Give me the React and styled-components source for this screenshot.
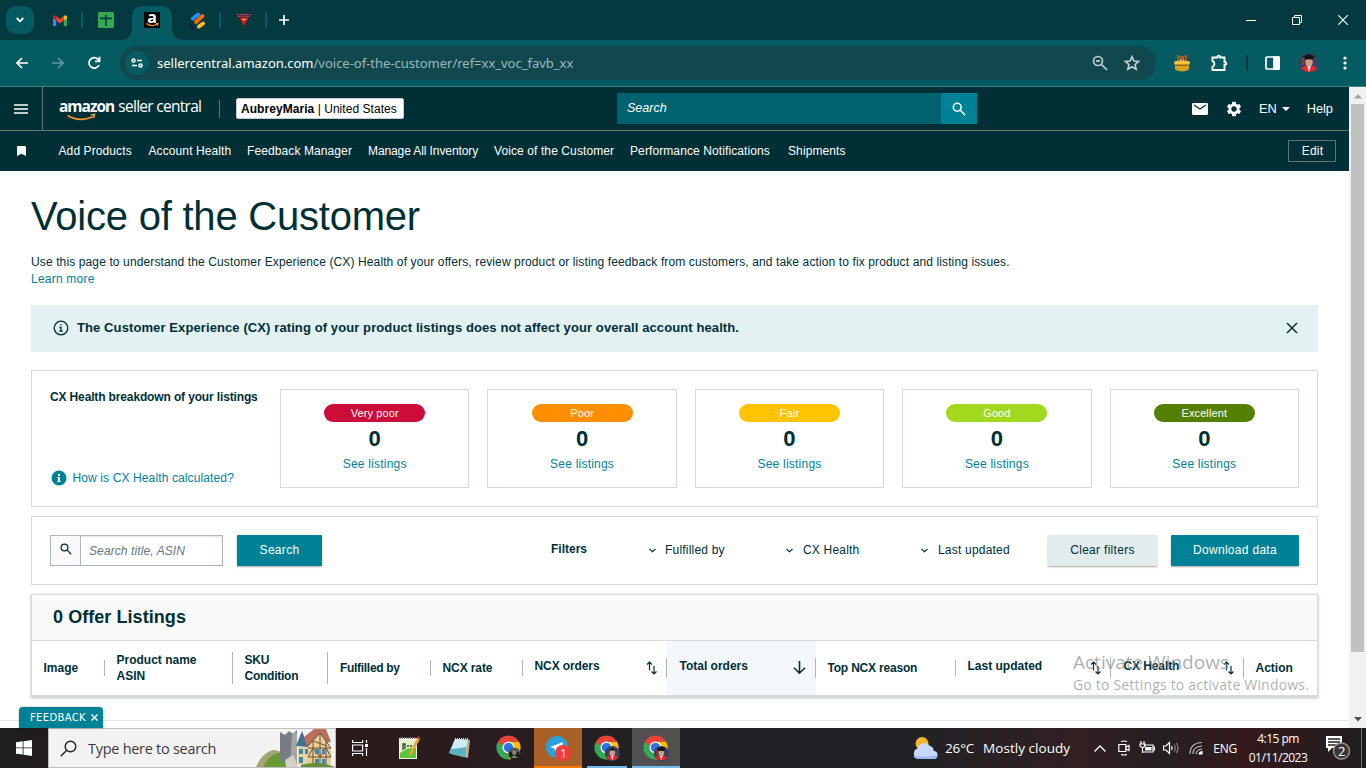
import React from "react";
import styled, { createGlobalStyle } from "styled-components";

const GlobalStyle = createGlobalStyle`
  * { box-sizing: border-box; }
  body {
    margin: 0;
    background: #fff;
    overflow: hidden;
    font-family: "Liberation Sans", Arial, sans-serif;
    font-size: 12px;
    color: #002f36;
  }
  svg { display: block; flex: none; }
`;

const Screen = styled.div`
  width: 1366px;
  height: 768px;
  display: flex;
  flex-direction: column;
  overflow: hidden;
  white-space: nowrap;
`;

/* ---------- browser ---------- */

const TabStrip = styled.div`
  height: 40px;
  flex: none;
  display: flex;
  align-items: center;
  background: #023a3f;
  padding-left: 6px;
`;

const TabSearch = styled.div`
  width: 28px;
  height: 28px;
  border-radius: 10px;
  background: #055b62;
  display: flex;
  align-items: center;
  justify-content: center;
  margin-right: 3px;
`;

const Tab = styled.div`
  width: 46px;
  height: 16px;
  display: flex;
  align-items: center;
  justify-content: center;
  padding-left: 2px;
  border-right: 2px solid ${(p) => (p.$line ? "#055b62" : "transparent")};
`;

const ActiveTab = styled.div`
  width: 40px;
  height: 34px;
  margin: 6px 3px 0;
  padding-bottom: 6px;
  border-radius: 10px 10px 0 0;
  background: #055b62;
  display: flex;
  align-items: center;
  justify-content: center;
  position: relative;
  &::before, &::after {
    content: "";
    position: absolute;
    bottom: 0;
    width: 10px;
    height: 10px;
  }
  &::before {
    left: -10px;
    background: radial-gradient(circle at 0 0, transparent 9.5px, #055b62 10px);
  }
  &::after {
    right: -10px;
    background: radial-gradient(circle at 100% 0, transparent 9.5px, #055b62 10px);
  }
`;

const AmazonFavicon = styled.div`
  width: 16px;
  height: 16px;
  background: #000;
  color: #fff;
  font: bold 16px/11px "Open Sans", sans-serif;
  display: flex;
  flex-direction: column;
  align-items: center;
`;

const NewTab = styled.div`
  margin-left: 11px;
`;

const WindowButtons = styled.div`
  margin-left: auto;
  display: flex;
`;

const WindowButton = styled.div`
  width: 46px;
  display: flex;
  align-items: center;
  justify-content: center;
`;

const Toolbar = styled.div`
  height: 47px;
  flex: none;
  background: #055b62;
  border-bottom: 1px solid #3f7f84;
  display: flex;
  align-items: center;
  padding: 0 14px;
`;

const ToolIcon = styled.div`
  width: ${(p) => p.$w || 36}px;
  display: flex;
  align-items: center;
  justify-content: center;
`;

const AddressBar = styled.div`
  width: 1036px;
  height: 34px;
  margin-left: -2px;
  border-radius: 17px;
  background: #11484e;
  display: flex;
  align-items: center;
  padding: 0 16px 0 5px;
  color: #9db8bb;
  font: 13px "Noto Sans", sans-serif;
  letter-spacing: -0.01px;
  b {
    font-weight: normal;
    color: #fff;
  }
  > svg:last-child { margin-left: 16px; }
`;

const SiteInfo = styled.div`
  width: 24px;
  height: 24px;
  border-radius: 50%;
  background: #055b62;
  display: flex;
  align-items: center;
  justify-content: center;
  margin-right: 8px;
`;

const Url = styled.div`
  flex: 1;
`;

const ToolDivider = styled.div`
  width: 2px;
  height: 16px;
  margin: 0 17px 0 16px;
  background: #023a3f;
`;

const Viewport = styled.div`
  height: 641px;
  flex: none;
  display: flex;
`;

const Page = styled.div`
  width: 1349px;
  display: flex;
  flex-direction: column;
  position: relative;
`;

const Scrollbar = styled.div`
  width: 17px;
  background: #f1f1f1;
  display: flex;
  flex-direction: column;
  align-items: center;
  justify-content: space-between;
  padding: 7px 0 6px;
`;

const ScrollThumb = styled.div`
  width: 13px;
  height: 548px;
  background: #c1c1c1;
  margin: 5px 0 auto;
`;

/* ---------- seller central header ---------- */

const Header = styled.div`
  height: 44px;
  flex: none;
  background: #002f36;
  border-bottom: 1px solid #5f7377;
  display: flex;
  align-items: center;
  color: #fff;
`;

const MenuButton = styled.div`
  width: 43px;
  height: 43px;
  border-right: 1px solid #5f7377;
  display: flex;
  align-items: center;
  justify-content: center;
`;

const Logo = styled.div`
  width: 160px;
  height: 26px;
  margin-left: 16px;
  display: flex;
  flex-direction: column;
`;

const LogoText = styled.div`
  font: 15.5px/20px "Open Sans", sans-serif;
  letter-spacing: -0.72px;
  b {
    margin-right: 4px;
    letter-spacing: -1px;
  }
`;

const LogoSmile = styled.svg`
  margin: -3px 0 0 7px;
`;

const HeaderDivider = styled.div`
  width: 1px;
  height: 18px;
  background: #5f7377;
  margin-right: 16px;
`;

const AccountPicker = styled.div`
  width: 168px;
  height: 21px;
  border: 1px solid #c5cccc;
  border-radius: 2px;
  background: #fff;
  color: #000;
  line-height: 20px;
  padding-left: 4px;
  letter-spacing: 0.05px;
`;

const HeaderSearch = styled.div`
  width: 360px;
  height: 31px;
  margin-left: 213px;
  background: #00616f;
  display: flex;
  font-style: italic;
  font-size: 12.5px;
  line-height: 31px;
  padding-left: 10px;
  letter-spacing: 0;
`;

const HeaderSearchButton = styled.div`
  width: 36px;
  margin-left: auto;
  background: #008296;
  display: flex;
  align-items: center;
  justify-content: center;
`;

const HeaderTools = styled.div`
  margin-left: auto;
  padding-right: 16px;
  display: flex;
  align-items: center;
  font-size: 12.8px;
  line-height: 17px;
`;

const Language = styled.span`
  display: flex;
  align-items: center;
  gap: 5px;
  margin: 0 17px 0 16px;
`;

const NavBar = styled.div`
  height: 40px;
  flex: none;
  background: #002f36;
  color: #fff;
  display: flex;
  align-items: center;
  padding: 0 13px 0 17px;
`;

const NavLinks = styled.div`
  display: grid;
  grid-template-columns: 90px 98.5px 121px 126px 136px 158px 70px;
  margin-left: 32.5px;
  letter-spacing: 0.1px;
  span:nth-child(4) { letter-spacing: -0.1px; }
`;

const EditButton = styled.div`
  width: 48px;
  height: 22px;
  margin-left: auto;
  border: 1px solid #5f7377;
  text-align: center;
  line-height: 20px;
  letter-spacing: 0.2px;
  padding-left: 1px;
`;

/* ---------- page content ---------- */

const Content = styled.div`
  padding: 22px 31px 0;
  flex: 1;
`;

const Title = styled.h1`
  margin: 0;
  font-weight: normal;
  font-size: 40px;
  line-height: 46px;
  letter-spacing: -0.22px;
`;

const Intro = styled.p`
  margin: 15px 0 0;
  line-height: 17px;
  letter-spacing: 0.12px;
`;

const Link = styled.a`
  color: #008296;
  letter-spacing: 0.22px;
`;

const Alert = styled.div`
  height: 47px;
  margin-top: 17px;
  background: #e3f1f2;
  display: flex;
  align-items: center;
  gap: 8px;
  padding: 0 20px 2px 22px;
  font-size: 13px;
  font-weight: bold;
  letter-spacing: 0.1px;
  svg:last-child { margin-left: auto; }
`;

const Panel = styled.div`
  border: 1px solid #d5dbdb;
  display: flex;
`;

const HealthPanel = styled(Panel)`
  height: 137px;
  margin-top: 18px;
  padding: 18px;
`;

const HealthIntro = styled.div`
  width: 230px;
  height: 99px;
  display: flex;
  flex-direction: column;
  justify-content: space-between;
  padding: 1px 0 2px;
  b { letter-spacing: -0.14px; }
`;

const HowLink = styled(Link)`
  display: flex;
  align-items: center;
  gap: 5.5px;
  padding-left: 1px;
  letter-spacing: 0.12px;
`;

const HealthCards = styled.div`
  flex: 1;
  display: grid;
  grid-template-columns: repeat(5, 1fr);
  gap: 18px;
`;

const Card = styled.div`
  height: 99px;
  border: 1px solid #d5dbdb;
  padding-top: 14px;
  display: flex;
  flex-direction: column;
  align-items: center;
`;

const Pill = styled.div`
  width: 101px;
  height: 18px;
  border-radius: 9px;
  background: ${(p) => p.$color};
  color: #fff;
  font-size: 11px;
  line-height: 19px;
  text-align: center;
  letter-spacing: 0.1px;
`;

const Count = styled.div`
  font-size: 22px;
  font-weight: bold;
  line-height: 26px;
  margin: 4px 0 5px;
`;

const FilterPanel = styled(Panel)`
  height: 69px;
  margin-top: 9px;
  padding: 18px;
  align-items: flex-start;
  letter-spacing: 0.2px;
`;

const SearchBox = styled.div`
  width: 173px;
  height: 31px;
  border: 1px solid #aab7b8;
  display: flex;
  color: #687778;
  font-style: italic;
  line-height: 31px;
  letter-spacing: 0.1px;
  box-shadow: inset 0 1px 2px rgba(0, 0, 0, 0.12);
`;

const SearchBoxIcon = styled.div`
  width: 30px;
  background: #fafafa;
  border-right: 1px solid #aab7b8;
  margin-right: 8px;
  display: flex;
  justify-content: center;
  padding-top: 7px;
`;

const Button = styled.div`
  width: ${(p) => p.$w}px;
  height: 31px;
  margin-left: 14px;
  border-radius: 1px;
  background: ${(p) => (p.$light ? "#e3eced" : "#008296")};
  color: ${(p) => (p.$light ? "#002f36" : "#fff")};
  box-shadow: 0 1px 2px rgba(0, 0, 0, 0.35);
  line-height: 30px;
  text-align: center;
  letter-spacing: 0.3px;
`;

const FiltersLabel = styled.b`
  margin-left: 229px;
  width: 98px;
  line-height: 28px;
  letter-spacing: 0;
`;

const Filter = styled.div`
  width: ${(p) => p.$w}px;
  display: flex;
  align-items: center;
  gap: ${(p) => p.$gap || 9}px;
  height: 30px;
`;

const TablePanel = styled.div`
  height: 103px;
  margin-top: 9px;
  border: 1px solid #d5dbdb;
  border-bottom-width: 2px;
  box-shadow: 0 1px 3px rgba(0, 0, 0, 0.25);
`;

const TableTitle = styled.div`
  height: 46px;
  background: #fafafa;
  border-bottom: 1px solid #d5dbdb;
  font-size: 18px;
  font-weight: bold;
  line-height: 44px;
  padding-left: 21px;
  letter-spacing: 0.06px;
`;

const TableHead = styled.div`
  height: 54px;
  display: grid;
  grid-template-columns: 73px 128px 95px 103px 92px 144px 149px 140px 155px 133px 73px;
  font-weight: bold;
`;

const HeadCell = styled.div`
  background: ${(p) => (p.$active ? "#f4f8fa" : "none")};
  display: flex;
  align-items: center;
`;

const HeadLabel = styled.div`
  flex: 1;
  height: ${(p) => p.$h}px;
  line-height: 16px;
  border-right: ${(p) => (p.$last ? "none" : "1px solid #aab7b8")};
  padding: 0 9px 0 ${(p) => p.$pad || 11.5}px;
  letter-spacing: ${(p) => p.$ls || 0}px;
  display: flex;
  justify-content: space-between;
  white-space: pre;
  svg { margin-top: 3px; }
`;

const PageFooter = styled.div`
  height: 8px;
  border-top: 1px solid #e7e9e9;
`;

const FeedbackTab = styled.div`
  position: absolute;
  left: 19px;
  bottom: 0;
  width: 84px;
  height: 21px;
  border-radius: 4px 4px 0 0;
  background: #008296;
  box-shadow: 0 0 2px rgba(0, 0, 0, 0.4);
  color: #fff;
  font: 10px/21px "DejaVu Sans", sans-serif;
  letter-spacing: 0.35px;
  display: flex;
  align-items: center;
  gap: 5px;
  padding-left: 11px;
`;

const Watermark = styled.div`
  position: absolute;
  left: 1073px;
  top: 563px;
  color: rgba(140, 145, 145, 0.72);
  font: 14px/22px "Open Sans", sans-serif;
  letter-spacing: 0.19px;
  div {
    font-size: 19px;
    line-height: 24px;
    letter-spacing: 0;
  }
`;

/* ---------- taskbar ---------- */

const Taskbar = styled.div`
  height: 40px;
  flex: none;
  background: linear-gradient(90deg, #1f1d1e 0, #2b1b1c 26%, #2a1d1f 36%, #1f2124 50%, #202225 66%, #321f22 79%, #251f21 85%, #34191b 91%, #201d1e 100%);
  display: flex;
  align-items: center;
  color: #fff;
  font: 13.5px "Open Sans", sans-serif;
`;

const StartButton = styled.div`
  width: 48px;
  display: flex;
  justify-content: center;
`;

const TaskSearch = styled.div`
  width: 288px;
  height: 40px;
  border: 1px solid #bdbdbd;
  background: #f2f2f2;
  color: #3c3c3c;
  font-size: 14.5px;
  letter-spacing: -0.28px;
  display: flex;
  align-items: center;
  padding-left: 11px;
  gap: 11px;
  svg:last-child { margin-left: auto; }
`;

const TaskApp = styled.div`
  width: 48px;
  height: 40px;
  margin-right: 1.5px;
  display: flex;
  align-items: center;
  justify-content: center;
  background: ${(p) => p.$bg || "none"};
  border: solid ${(p) => p.$line || "transparent"};
  border-width: 0 0 2px;
  padding-top: 2px;
`;

const RunningApp = styled(TaskApp)`
  width: 40px;
  margin: 0 5px 0 3.5px;
`;

const Tray = styled.div`
  margin-left: auto;
  display: flex;
  align-items: center;
`;

const TrayText = styled.span`
  font-size: ${(p) => p.$size || 13.5}px;
  letter-spacing: ${(p) => p.$ls || 0}px;
  margin-left: ${(p) => p.$left || 0}px;
`;

const TrayIcon = styled.div`
  width: ${(p) => p.$w}px;
  margin-left: ${(p) => p.$left || 0}px;
  display: flex;
  justify-content: center;
`;

const Clock = styled.div`
  width: 66px;
  margin: 0 14px 0 8px;
  font-size: 12px;
  line-height: 19px;
  text-align: center;
  letter-spacing: -0.52px;
`;

const DesktopEdge = styled.div`
  width: 1px;
  height: 40px;
  background: #77706f;
  margin: 0 4px 0 11px;
`;

/* ---------- icons ---------- */

const Icon = ({ w = 16, h = w, box, children, color = "#fff", sw = 1.5, fill = "none" }) => (
  <svg width={w} height={h} viewBox={box || `0 0 ${w} ${h}`} fill={fill} stroke={fill === "none" ? color : "none"} strokeWidth={sw}>
    {children}
  </svg>
);

const GmailIcon = () => (
  <Icon w={14} h={11} fill="#fff">
    <path d="M0 1.5V11h3.2V4.3z" fill="#4285f4" />
    <path d="M14 1.5V11h-3.2V4.3z" fill="#34a853" />
    <path d="M3.2 1 7 4l3.8-3v4.5L7 8.4 3.2 5.5z" fill="#ea4335" />
    <path d="M10.8 1C12.5-.3 14 .4 14 2.2v1L10.8 5.6z" fill="#fbbc04" />
    <path d="M3.2 1C1.5-.3 0 .4 0 2.2v1l3.2 2.4z" fill="#c5221f" />
  </Icon>
);

const SheetIcon = () => (
  <Icon w={16} fill="#34a853">
    <rect width="16" height="16" rx="1.5" />
    <path d="M2 5.5h12v1.7H8.700V14H7V7.200H2zM7 3h1.700v3H7z" fill="#023a3f" />
  </Icon>
);

const StripesIcon = () => (
  <Icon w={16} h={17} sw={4}>
    <path d="M3 6.500 8 2.500" stroke="#1e90ff" strokeLinecap="round" />
    <path d="M6 10 12.500 4" stroke="#ff6600" strokeLinecap="round" />
    <path d="M9 14.500 13 11.500" stroke="#fdb92c" strokeLinecap="round" />
    <path d="M0 12l4 2.500V17L0 16z" fill="#101c5c" stroke="none" />
  </Icon>
);

const TriangleIcon = () => (
  <Icon w={16} h={14} fill="#f01414">
    <path d="M0 1h15.500l-1 3H1.500z" fill="#5a2350" />
    <path d="M1 1.500h14M2 3.500h11" stroke="#c8553f" strokeWidth=".8" strokeDasharray="2 1" />
    <path d="M3.500 4.500h9L8 13z" />
    <path d="M6 6.500h4.500M8 5v3" stroke="#ff9a9a" strokeWidth=".8" />
  </Icon>
);

const Magnifier = ({ w, color, sw = 1.5, minus }) => (
  <Icon w={w} box="0 0 16 16" color={color} sw={sw}>
    <circle cx="6" cy="6" r="4.500" />
    <path d="M9.500 9.500 15 15" />
    {minus && <path d="M4 6h4" />}
  </Icon>
);

const Gear = () => (
  <Icon w={18} box="0 0 24 24" fill="#fff">
    <path d="M19.140 12.940c.04-.3.060-.61.060-.94s-.02-.64-.07-.94l2.030-1.580a.49.49 0 0 0 .12-.61l-1.920-3.320a.49.49 0 0 0-.59-.22l-2.390.96c-.5-.38-1.030-.7-1.620-.94l-.36-2.540A.48.48 0 0 0 13.920 2.400h-3.840c-.24 0-.43.17-.47.41l-.36 2.540c-.59.24-1.130.57-1.620.94l-2.390-.96a.48.48 0 0 0-.59.22L2.740 8.870a.48.48 0 0 0 .12.61l2.030 1.580c-.05.3-.09.63-.09.94s.02.64.07.94l-2.030 1.580a.49.49 0 0 0-.12.61l1.920 3.320c.12.22.37.29.59.22l2.390-.96c.5.38 1.030.7 1.620.94l.36 2.540c.05.24.24.41.48.41h3.840c.24 0 .44-.17.47-.41l.36-2.540c.59-.24 1.130-.56 1.620-.94l2.390.96c.22.08.47 0 .59-.22l1.920-3.320a.48.48 0 0 0-.12-.61zM12 15.600A3.600 3.600 0 1 1 12 8.400a3.600 3.600 0 0 1 0 7.200z" />
  </Icon>
);

const Avatar = ({ cap = true }) => (
  <g>
    <circle cx="10" cy="10" r="10" fill="#34435e" />
    <path d="M2 15q8-6 16 0a10 10 0 0 1-16 0z" fill="#e8252c" />
    <path d="M8 12.500h4l-2 6.500z" fill="#e8eefa" />
    <ellipse cx="10" cy="9" rx="3.800" ry="4.600" fill="#d49b83" />
    {cap ? <path d="M3.500 3.500 10 1l6.500 2.500L14 4.800V7q-4-1.500-8 0V4.800z" fill="#141414" /> : <path d="M6 8q0-5 4-5t4 5l-1-2H7z" fill="#1d1614" />}
    {cap && <path d="M4 5v7" stroke="#d32b2b" strokeWidth="1.300" />}
  </g>
);

const ChromeIcon = ({ kind }) => (
  <Icon w={26} h={26} fill="#fff">
    <path d="M12.500 12.500 22.900 6.500A12 12 0 0 1 12.500 24.500z" fill="#fbbc04" />
    <path d="M12.500 12.500 12.500 24.500A12 12 0 0 1 2.100 6.500z" fill="#34a853" />
    <path d="M12.500 6.500h10.400l-5 9z" fill="#fbbc04" />
    <path d="M2.100 6.500A12 12 0 0 1 22.900 6.500H12.500L7.200 9.500 5 10z" fill="#ea4335" />
    <circle cx="12.500" cy="12.500" r="6" />
    <circle cx="12.500" cy="12.500" r="4.700" fill="#2f72e8" />
    <g transform="translate(10.800 11) scale(.75)">
      {kind === "photo" ? (
        <>
          <circle cx="10" cy="10" r="8" fill="#535353" />
          <path d="M3 8h13l2 5-5 6H6l-3-6z" fill="#202020" />
          <circle cx="10" cy="9" r="3" fill="#978070" />
          <path d="m5 16 5-4 5 4z" fill="#717f83" />
        </>
      ) : (
        <Avatar cap={kind === "cap"} />
      )}
    </g>
  </Icon>
);

const SortIcon = () => (
  <Icon w={11} h={14} color="#002f36" sw={1.2}>
    <path d="M3.500 9.500V1M1 3.500 3.500 1 6 3.500M8 5v8M5.500 10.500 8 13l2.500-2.500" />
  </Icon>
);

const SortDownIcon = () => (
  <Icon w={13} h={14} color="#002f36" sw={1.6}>
    <path d="M6.500 0v12M1 6.800l5.500 5.400L12 6.800" />
  </Icon>
);

const SmallChevron = () => (
  <Icon w={7} h={5} color="#002f36" sw={1.1}>
    <path d="m.5 1 3 2.700L6.500 1" />
  </Icon>
);

const VillagePicture = () => (
  <Icon w={79} h={38} fill="#789c38">
    <path d="M0 38Q6 24 17 21q13 0 20 17z" fill="#a3a574" />
    <path d="M7 38q9-17 21-14l12 14z" fill="#679a35" />
    <path d="M24 3l5 3 4-4 4 3 4-4v32l-8 4-9-6z" fill="#777d82" />
    <path d="M36 4h5v31l-7 3z" fill="#a3a6a5" />
    <path d="M29 31l8-5 5 12H30z" fill="#d5d0c6" />
    <path d="M42 18h14v18H42z" fill="#e8d4a3" />
    <path d="M40 17 46 2l6 16z" fill="#426f91" />
    <path d="M48 8 58 0h12l5 13-24 5z" fill="#b9705f" />
    <path d="M51 18 64 4l11 15v17H51z" fill="#e6cf98" />
    <path d="M51 18 64 4l11 15M52 19h23M52 28h23M57 12v24M64 5v31M70 13v23M52 28l5-9 7 9 6-9 5 9M57 12l14 5" fill="none" stroke="#704e32" strokeWidth="1" />
    <path d="M43 20h4v5h-4zM49 20h3v5h-3zM43 28h4v6h-4zM59 20h4v5h-4zM66 20h3v5h-3zM59 30h4v5h-4zM66 30h3v5h-3z" fill="#4186ad" />
    <path d="M45 36q16-5 34 2H45z" fill="#648f36" />
  </Icon>
);

/* ---------- data ---------- */

const navItems = [
  "Add Products",
  "Account Health",
  "Feedback Manager",
  "Manage All Inventory",
  "Voice of the Customer",
  "Performance Notifications",
  "Shipments",
];

const ratings = [
  { label: "Very poor", color: "#cc0c39" },
  { label: "Poor", color: "#ff8f00" },
  { label: "Fair", color: "#ffc400" },
  { label: "Good", color: "#a2d81e" },
  { label: "Excellent", color: "#538000" },
];

const columns = [
  { label: "Image", h: 16 },
  { label: "Product name\nASIN", h: 32 },
  { label: "SKU\nCondition", h: 32, ls: -0.25 },
  { label: "Fulfilled by", h: 16, ls: -0.3, pad: 12 },
  { label: "NCX rate", h: 16, ls: -0.1 },
  { label: "NCX orders", h: 20, ls: -0.1, sort: "both" },
  { label: "Total orders", h: 20, pad: 12.5, sort: "down" },
  { label: "Top NCX reason", h: 16, ls: -0.2 },
  { label: "Last updated", h: 20, sort: "both" },
  { label: "CX Health", h: 20, ls: -0.1, pad: 12.5, sort: "both" },
  { label: "Action", h: 16 },
];

const Browser = () => (
  <>
    <TabStrip>
      <TabSearch>
        <Icon w={8} h={6} sw={1.8}><path d="m.7 1 3.300 3.300L7.300 1" /></Icon>
      </TabSearch>
      <Tab $line><GmailIcon /></Tab>
      <Tab><SheetIcon /></Tab>
      <ActiveTab>
        <AmazonFavicon>
          a
          <Icon w={13} h={4} color="#ff9900" sw={1.2}><path d="M.5.5q5.500 4 10.500.5M10 .5h2l-.7 2" /></Icon>
        </AmazonFavicon>
      </ActiveTab>
      <Tab $line><StripesIcon /></Tab>
      <Tab $line><TriangleIcon /></Tab>
      <NewTab>
        <Icon w={12} sw={1.7}><path d="M6 1v10M1 6h10" /></Icon>
      </NewTab>
      <WindowButtons>
        <WindowButton><Icon w={10} sw={1}><path d="M0 5.500h10" /></Icon></WindowButton>
        <WindowButton><Icon w={10} sw={1}><path d="M.5 2.500h7v7h-7zM2.500 2.500v-2h7v7h-2" /></Icon></WindowButton>
        <WindowButton><Icon w={10} sw={1.1}><path d="m0 0 10 10M10 0 0 10" /></Icon></WindowButton>
      </WindowButtons>
    </TabStrip>
    <Toolbar>
      <ToolIcon $w={16}><Icon w={12} sw={1.7}><path d="M12 6H1M6 1 1 6l5 5" /></Icon></ToolIcon>
      <ToolIcon $w={56}><Icon w={12} color="#5f9a9e" sw={1.7}><path d="M0 6h11M6 1l5 5-5 5" /></Icon></ToolIcon>
      <ToolIcon $w={16}>
        <Icon w={14} sw={1.8}><path d="M12 9A5.200 5.200 0 1 1 11 3.300l1.500 1.700M12.500.8v4.500H8" /></Icon>
      </ToolIcon>
      <ToolIcon $w={20} />
      <AddressBar>
        <SiteInfo>
          <Icon w={12} h={10} sw={1.6}>
            <circle cx="2.500" cy="2.500" r="1.500" /><path d="M6 2.500h5M1 7.500h5" /><circle cx="9.500" cy="7.500" r="1.500" />
          </Icon>
        </SiteInfo>
        <Url><b>sellercentral.amazon.com</b>/voice-of-the-customer/ref=xx_voc_favb_xx</Url>
        <Magnifier w={16} color="#c3cfd0" sw={1.7} minus />
        <Icon w={16} box="0 0 24 24" color="#c3cfd0" sw={2.4}>
          <path d="m12 2.500 2.900 6.600 7.100.6-5.400 4.700 1.700 7L12 17.700 5.700 21.400l1.700-7L2 9.700l7.100-.6z" />
        </Icon>
      </AddressBar>
      <ToolIcon $w={52}>
        <Icon w={18} fill="#d9a220">
          <path d="M4 1h2.500v1h5V1H14v8H4z" fill="#97602f" />
          <ellipse cx="9" cy="6" rx="2.500" ry="2" fill="#e0b07a" />
          <path d="M6 4.500h1.300M10.700 4.500H12M8.300 5.500h1.400" stroke="#321e14" />
          <rect x="1" y="7" width="16" height="4" rx="2" fill="#f5c23a" />
          <path d="M2 11h14v4.500Q9 19.500 2 15.500z" />
          <path d="M2.500 11.200h13" stroke="#9c6416" />
        </Icon>
      </ToolIcon>
      <ToolIcon $w={22}>
        <Icon w={18} sw={1.9}>
          <path d="M2.500 3.500h5v-.6a1.300 1.300 0 0 1 2.600 0v.6h4.400v4.700h.4a1.400 1.400 0 0 1 0 2.800h-.4v5h-12v-3.400c2.600-.7 2.600-4.700 0-5.400z" />
        </Icon>
      </ToolIcon>
      <ToolDivider />
      <Icon w={15} h={14} sw={1.7}><rect x="1" y="1" width="13" height="12" rx="1" /><path d="M9 1h5v12H9z" fill="#fff" /></Icon>
      <ToolIcon $w={58}><Icon w={20} fill="#fff"><Avatar /></Icon></ToolIcon>
      <Icon w={14} fill="#fff"><circle cx="7" cy="2" r="1.600" /><circle cx="7" cy="7" r="1.600" /><circle cx="7" cy="12" r="1.600" /></Icon>
    </Toolbar>
  </>
);

const SellerHeader = () => (
  <>
    <Header>
      <MenuButton><Icon w={14} h={10} sw={1.7}><path d="M0 1h14M0 5h14M0 9h14" /></Icon></MenuButton>
      <Logo>
        <LogoText><b>amazon</b>seller central</LogoText>
        <LogoSmile width="31" height="8" viewBox="0 0 31 8" fill="none" stroke="#f69a28" strokeWidth="1.600">
          <path d="M1.500 2.500q12 7 25 1.500M25 2l3.500-.5-1 3.500" />
        </LogoSmile>
      </Logo>
      <HeaderDivider />
      <AccountPicker><b>AubreyMaria</b> | United States</AccountPicker>
      <HeaderSearch>
        Search
        <HeaderSearchButton><Magnifier w={14} sw={1.8} /></HeaderSearchButton>
      </HeaderSearch>
      <HeaderTools>
        <Icon w={16} h={12} fill="#fff">
          <rect width="16" height="12" rx="1.200" /><path d="m2 2 6 4 6-4" fill="none" stroke="#002f36" strokeWidth="1.200" />
        </Icon>
        <ToolIcon $w={17} />
        <Gear />
        <Language>EN<Icon w={8} h={4} fill="#fff"><path d="M0 0h8L4 4z" /></Icon></Language>
        <span>Help</span>
      </HeaderTools>
    </Header>
    <NavBar>
      <Icon w={9} h={10} fill="#fff"><path d="M0 1q0-1 1-1h7q1 0 1 1v9L4.500 7.800 0 10z" /></Icon>
      <NavLinks>
        {navItems.map((item) => <span key={item}>{item}</span>)}
      </NavLinks>
      <EditButton>Edit</EditButton>
    </NavBar>
  </>
);

const Listings = () => (
  <TablePanel>
    <TableTitle>0 Offer Listings</TableTitle>
    <TableHead>
      {columns.map((col, i) => (
        <HeadCell key={col.label} $active={col.sort === "down"}>
          <HeadLabel $h={col.h} $pad={col.pad} $ls={col.ls} $last={i === columns.length - 1}>
            {col.label}
            {col.sort === "both" && <SortIcon />}
            {col.sort === "down" && <SortDownIcon />}
          </HeadLabel>
        </HeadCell>
      ))}
    </TableHead>
  </TablePanel>
);

const WindowsTaskbar = () => (
  <Taskbar>
    <StartButton>
      <Icon w={16} fill="#fff"><path d="M0 2.300 6.700 1.300v6.200H0zM7.500 1.200 16 0v7.500H7.500zM0 8.300h6.700v6.300L0 13.700zM7.500 8.300H16V16l-8.500-1.200z" /></Icon>
    </StartButton>
    <TaskSearch>
      <Icon w={17} color="#222" sw={1.4}><circle cx="10.500" cy="6.500" r="5.300" /><path d="M6.700 10.300.8 16.200" /></Icon>
      Type here to search
      <VillagePicture />
    </TaskSearch>
    <TaskApp>
      <Icon w={16} sw={1.2}><path d="M.6 0v2.500h10V0M.6 16v-2.500h10V16M.6 5h10v6H.6zM14.500 0v3M14.500 8v8" /><path d="M13 4h3v3h-3z" fill="#fff" stroke="none" /></Icon>
    </TaskApp>
    <TaskApp>
      <Icon w={23} h={24} fill="#f4f4e9">
        <path d="M1 2h18v21H1z" /><path d="M2 6h16v16H2z" fill="#5cc23a" /><path d="M2 4h16v8q-8-1-16 5z" fill="#e4f2c8" />
        <path d="M2 2h16" stroke="#777" strokeDasharray="1 1" strokeWidth="2" />
        <path d="M5 14V8h2v5M9 10h2M12 10h2" stroke="#234121" fill="none" strokeWidth="1.300" />
        <path d="m19 2 3 1-8 15-3 2 1-4z" fill="#eea42d" /><path d="m19 2 1-2 2 1v2z" fill="#b5332c" />
      </Icon>
    </TaskApp>
    <TaskApp>
      <Icon w={23} h={22} fill="#7fcbd7">
        <path d="m8 2 14 1-2 18-17-4z" fill="#b8b091" /><path d="m7 2 12 1-2 17-16-4z" /><path d="m7 2 13 1-2 8-7 3-8-2z" fill="#d0edf3" />
        <path d="m3 12 9-1 6-1-1 10-16-4z" fill="#5ab1c1" /><path d="M7 2h14" stroke="#d8d9ca" strokeDasharray="1 1" strokeWidth="2" />
      </Icon>
    </TaskApp>
    <TaskApp><ChromeIcon kind="photo" /></TaskApp>
    <TaskApp $bg="#a96128" $line="#ff7800">
      <Icon w={26} h={26} fill="#29a1dc">
        <circle cx="12" cy="12" r="11" /><path d="m5 12 13-5-2.500 11-3.500-3-2 2-.5-3.500z" fill="#fff" />
        <circle cx="18" cy="18" r="8" fill="#f33c39" />
        <text x="15" y="22.500" fontSize="12" fill="#fff">1</text>
      </Icon>
    </TaskApp>
    <RunningApp $line="#76b9ed"><ChromeIcon kind="person" /></RunningApp>
    <TaskApp $bg="#505052" $line="#76b9ed"><ChromeIcon kind="cap" /></TaskApp>
    <Tray>
      <Icon w={26} h={24} fill="#c6d9fb">
        <circle cx="10" cy="7.500" r="6.500" fill="#f7b52b" />
        <path d="M6 23a5.500 5.500 0 0 1-.5-10.500A7 7 0 0 1 18 10a4.500 4.500 0 0 1 3.500 5 4 4 0 0 1 0 8z" />
        <path d="M6 23a5 5 0 0 1-4.500-3q9 2 23.500-1-1 4-4 4z" fill="#9bb9ec" />
      </Icon>
      <TrayText $left={7} $ls={-0.2}>26°C</TrayText>
      <TrayText $left={9} $ls={0.05}>Mostly cloudy</TrayText>
      <TrayIcon $w={36} $left={12}><Icon w={12} h={7} sw={1.3}><path d="m.5 6.500 5.500-5.500 5.500 5.500" /></Icon></TrayIcon>
      <Icon w={12} h={16} sw={1.2}><path d="M.8 4.500h7v7h-7zM8 7l3-1.500v5L8 9M3 1.500q3-1 6 0M3 14.500q3 1 6 0" /></Icon>
      <TrayIcon $w={33}><Icon w={16} h={14} sw={1.2}><path d="M5 4h9v7H4M14.500 6h1v3h-1M2 0v3M5 0v3M1 3h5v2L3.500 7 1 5zM3.500 7v5" /><path d="M6 6h6.500v3.500H6z" fill="#fff" stroke="none" /></Icon></TrayIcon>
      <Icon w={16} h={14} sw={1.2}><path d="M.6 5h2.400L6.500 1.500v11L3 9H.6z" /><path d="M8.500 5q1.500 2 0 4" /><path d="M11 3.500q2.500 3.500 0 7M13.300 2q3.500 5 0 10" stroke="#8b8585" /></Icon>
      <TrayIcon $w={34}>
        <Icon w={14} sw={1.2}><path d="M1 13Q1 2 13 1.500M4 13q0-7.500 9-8M7 13q.5-4.500 6-5" stroke="#bbb" /><path d="M10 13q.3-2 3-2.500V13z" fill="#fff" /></Icon>
      </TrayIcon>
      <TrayText $size={12} $ls={-0.2}>ENG</TrayText>
      <Clock>4:15 pm<br />01/11/2023</Clock>
      <Icon w={25} h={26} fill="#fff">
        <path d="M1 1h16v12H7l-4 4v-4H1z" /><path d="M3 4h12M3 7h12M3 10h12" stroke="#241e20" />
        <circle cx="16.500" cy="16" r="8" fill="#3a3637" stroke="#99908f" />
        <text x="13" y="21" fontSize="13">2</text>
      </Icon>
      <DesktopEdge />
    </Tray>
  </Taskbar>
);

const App = () => {
  return (
    <Screen>
      <GlobalStyle />
      <Browser />
      <Viewport>
        <Page>
          <SellerHeader />
          <Content>
            <Title>Voice of the Customer</Title>
            <Intro>
              Use this page to understand the Customer Experience (CX) Health of your offers, review product or listing feedback from customers, and take action to fix product and listing issues.
              <br />
              <Link>Learn more</Link>
            </Intro>
            <Alert>
              <Icon w={16} color="#002f36" sw={1.3}><circle cx="8" cy="8" r="6.800" /><path d="M6.500 7.500H8V11M6.300 11.200h3.500M7.300 4.800h1.400" /></Icon>
              The Customer Experience (CX) rating of your product listings does not affect your overall account health.
              <Icon w={12} color="#002f36" sw={1.5}><path d="m1 1 10 10M11 1 1 11" /></Icon>
            </Alert>
            <HealthPanel>
              <HealthIntro>
                <b>CX Health breakdown of your listings</b>
                <HowLink>
                  <Icon w={16} fill="#008296"><circle cx="8" cy="8" r="7.500" /><path d="M7 4h2v2H7zM6 7h3v4h.5v1H6.500v-1H7V8H6z" fill="#fff" /></Icon>
                  How is CX Health calculated?
                </HowLink>
              </HealthIntro>
              <HealthCards>
                {ratings.map((r) => (
                  <Card key={r.label}>
                    <Pill $color={r.color}>{r.label}</Pill>
                    <Count>0</Count>
                    <Link>See listings</Link>
                  </Card>
                ))}
              </HealthCards>
            </HealthPanel>
            <FilterPanel>
              <SearchBox>
                <SearchBoxIcon><Magnifier w={12} color="#002f36" sw={1.7} /></SearchBoxIcon>
                Search title, ASIN
              </SearchBox>
              <Button $w={85}>Search</Button>
              <FiltersLabel>Filters</FiltersLabel>
              <Filter $w={137}><SmallChevron />Fulfilled by</Filter>
              <Filter $w={135} $gap={10}><SmallChevron />CX Health</Filter>
              <Filter $w={113} $gap={10}><SmallChevron />Last updated</Filter>
              <Button $w={109} $light>Clear filters</Button>
              <Button $w={128}>Download data</Button>
            </FilterPanel>
            <Listings />
          </Content>
          <PageFooter />
          <Watermark><div>Activate Windows</div>Go to Settings to activate Windows.</Watermark>
          <FeedbackTab>
            FEEDBACK
            <Icon w={7} sw={1.5}><path d="m.5.5 6 6M6.500.5l-6 6" /></Icon>
          </FeedbackTab>
        </Page>
        <Scrollbar>
          <Icon w={8} h={5} fill="#a3a3a3"><path d="M4 0 8 4.500H0z" /></Icon>
          <ScrollThumb />
          <Icon w={8} h={5} fill="#505050"><path d="M0 0h8L4 4.500z" /></Icon>
        </Scrollbar>
      </Viewport>
      <WindowsTaskbar />
    </Screen>
  );
};

export default App;
